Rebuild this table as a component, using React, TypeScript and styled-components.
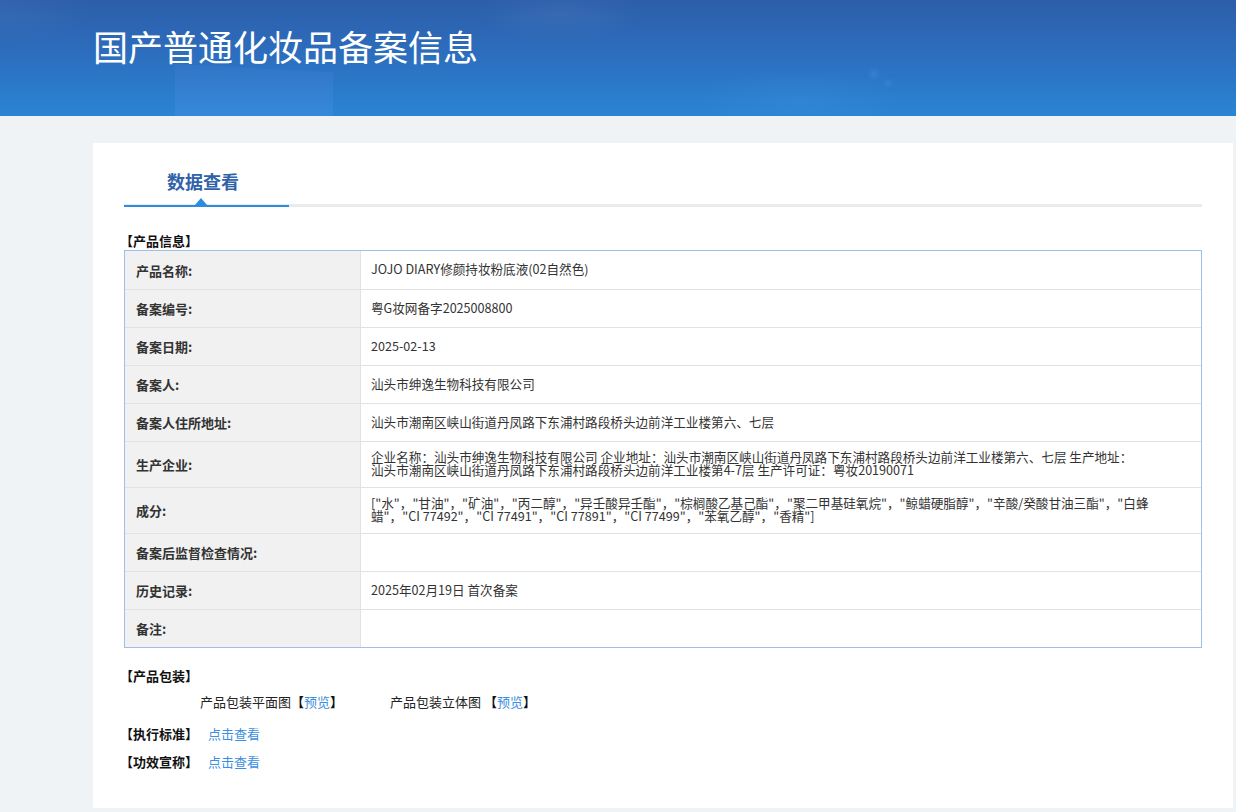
import React from "react";
import styled, { createGlobalStyle } from "styled-components";

const GlobalStyle = createGlobalStyle`
  html, body { margin: 0; padding: 0; }
  body {
    background: #eff3f6;
    font-family: "Microsoft YaHei", "Noto Sans CJK SC", "Noto Sans", sans-serif;
    color: #333;
  }
`;

const Page = styled.div`
  min-height: 812px;
  background: #eff3f6;
`;

const Header = styled.header`
  height: 116px;
  position: relative;
  overflow: hidden;
  background:
    radial-gradient(ellipse 120px 40px at 560px 14px, rgba(255,255,255,0.05), transparent 70%),
    radial-gradient(ellipse 140px 50px at 0px 10px, rgba(255,255,255,0.04), transparent 70%),
    radial-gradient(circle 7px at 874px 74px, rgba(60,140,225,0.5), transparent 100%),
    radial-gradient(circle 5px at 888px 83px, rgba(60,140,225,0.5), transparent 100%),
    radial-gradient(ellipse 150px 45px at 800px 100px, rgba(60,150,225,0.25), transparent 70%),
    linear-gradient(180deg, #2c5ea9 0%, #2d6dbd 45%, #2a84d4 100%);
  display: flex;
  align-items: center;
`;

const HeaderGlow = styled.div`
  position: absolute;
  left: 175px;
  bottom: 0;
  width: 158px;
  height: 52px;
  background: linear-gradient(180deg, rgba(90,140,225,0.12), rgba(90,150,235,0.25));
  clip-path: polygon(0 0, 100% 16%, 100% 100%, 0 100%);
`;

const Title = styled.h1`
  position: relative;
  margin: 0 0 24px 93px;
  font-size: 35px;
  font-weight: 400;
  color: #ffffff;
  line-height: 44px;
`;

const Card = styled.main`
  margin: 27px 3px 0 93px;
  width: 1140px;
  background: #fff;
  box-sizing: border-box;
  padding: 18px 31px 45px 31px;
  height: 665px;
`;

const TabBar = styled.div`
  display: flex;
  border-bottom: 3px solid #ebebeb;
`;

const Tab = styled.div`
  position: relative;
  width: 165px;
  height: 46px;
  line-height: 40px;
  padding-left: 43px;
  font-size: 18px;
  font-weight: 700;
  color: #2f62a8;
  margin-bottom: -3px;
  border-bottom: 2px solid #2b8ce0;
  box-sizing: border-box;
  &::after {
    content: "";
    position: absolute;
    left: 71px;
    bottom: 0;
    width: 0;
    height: 0;
    border-left: 6px solid transparent;
    border-right: 6px solid transparent;
    border-bottom: 7px solid #2b8ce0;
  }
`;

const SectionTitle = styled.div<{ $top: number }>`
  margin-top: ${(p) => p.$top}px;
  font-size: 13px;
  font-weight: 700;
  color: #111;
  line-height: 18px;
  margin-left: -4px;
`;

const Table = styled.div`
  display: grid;
  grid-template-columns: 236px 1fr;
  border: 1px solid #9fbfe8;
`;

const LabelCell = styled.div<{ $last?: boolean; $first?: boolean }>`
  background: #f1f1f1;
  border-right: 1px solid #e2e2e2;
  border-bottom: ${(p) => (p.$last ? "none" : "1px solid #e2e2e2")};
  min-height: ${(p) => (p.$first ? 38 : 37)}px;
  display: flex;
  align-items: center;
  padding-left: 11px;
  font-size: 13px;
  font-weight: 700;
  color: #333;
`;

const ValueCell = styled.div<{ $last?: boolean; $first?: boolean }>`
  border-bottom: ${(p) => (p.$last ? "none" : "1px solid #e2e2e2")};
  min-height: ${(p) => (p.$first ? 38 : 37)}px;
  box-sizing: border-box;
  display: flex;
  flex-direction: column;
  justify-content: center;
  padding: 8px 10px 11px 10px;
  font-size: 12.6px;
  line-height: 13px;
  color: #333;
`;

const Line = styled.span`
  display: block;
  white-space: nowrap;
`;

const PackRow = styled.div`
  display: flex;
  margin-top: 8px;
  padding-left: 76px;
  font-size: 13px;
  line-height: 18px;
  color: #222;
`;

const PackItem = styled.span<{ $width?: number }>`
  width: ${(p) => (p.$width ? `${p.$width}px` : "auto")};
`;

const Bracket = styled.span`
  color: #111;
  font-weight: 700;
`;

const Link = styled.a`
  color: #3b8fe0;
  text-decoration: none;
  cursor: pointer;
`;

const InfoRow = styled.div<{ $top: number }>`
  margin-top: ${(p) => p.$top}px;
  margin-left: -4px;
  display: flex;
  align-items: center;
  gap: 10px;
  font-size: 13px;
  line-height: 18px;
`;

const InfoLabel = styled.span`
  font-weight: 700;
  color: #111;
`;

const rows: { label: string; value: string[] }[] = [
  { label: "产品名称:", value: ["JOJO DIARY修颜持妆粉底液(02自然色)"] },
  { label: "备案编号:", value: ["粤G妆网备字2025008800"] },
  { label: "备案日期:", value: ["2025-02-13"] },
  { label: "备案人:", value: ["汕头市绅逸生物科技有限公司"] },
  { label: "备案人住所地址:", value: ["汕头市潮南区峡山街道丹凤路下东浦村路段桥头边前洋工业楼第六、七层"] },
  {
    label: "生产企业:",
    value: [
      "企业名称：汕头市绅逸生物科技有限公司 企业地址：汕头市潮南区峡山街道丹凤路下东浦村路段桥头边前洋工业楼第六、七层 生产地址：",
      "汕头市潮南区峡山街道丹凤路下东浦村路段桥头边前洋工业楼第4-7层 生产许可证：粤妆20190071",
    ],
  },
  {
    label: "成分:",
    value: [
      "[\"水\"，\"甘油\"，\"矿油\"，\"丙二醇\"，\"异壬酸异壬酯\"，\"棕榈酸乙基己酯\"，\"聚二甲基硅氧烷\"，\"鲸蜡硬脂醇\"，\"辛酸/癸酸甘油三酯\"，\"白蜂",
      "蜡\"，\"CI 77492\"，\"CI 77491\"，\"CI 77891\"，\"CI 77499\"，\"苯氧乙醇\"，\"香精\"]",
    ],
  },
  { label: "备案后监督检查情况:", value: [] },
  { label: "历史记录:", value: ["2025年02月19日 首次备案"] },
  { label: "备注:", value: [] },
];

export default function App() {
  return (
    <Page>
      <GlobalStyle />
      <Header>
        <HeaderGlow />
        <Title>国产普通化妆品备案信息</Title>
      </Header>
      <Card>
        <TabBar>
          <Tab>数据查看</Tab>
        </TabBar>
        <SectionTitle $top={25}>【产品信息】</SectionTitle>
        <Table>
          {rows.map((r, i) => {
            const last = i === rows.length - 1;
            const first = i === 0;
            return (
              <React.Fragment key={r.label}>
                <LabelCell $last={last} $first={first}>{r.label}</LabelCell>
                <ValueCell $last={last} $first={first}>
                  {r.value.map((v) => (
                    <Line key={v}>{v}</Line>
                  ))}
                </ValueCell>
              </React.Fragment>
            );
          })}
        </Table>
        <SectionTitle $top={19}>【产品包装】</SectionTitle>
        <PackRow>
          <PackItem $width={190}>
            产品包装平面图<Bracket>【</Bracket>
            <Link>预览</Link>
            <Bracket>】</Bracket>
          </PackItem>
          <PackItem>
            产品包装立体图 <Bracket>【</Bracket>
            <Link>预览</Link>
            <Bracket>】</Bracket>
          </PackItem>
        </PackRow>
        <InfoRow $top={14}>
          <InfoLabel>【执行标准】</InfoLabel>
          <Link>点击查看</Link>
        </InfoRow>
        <InfoRow $top={10}>
          <InfoLabel>【功效宣称】</InfoLabel>
          <Link>点击查看</Link>
        </InfoRow>
      </Card>
    </Page>
  );
}
